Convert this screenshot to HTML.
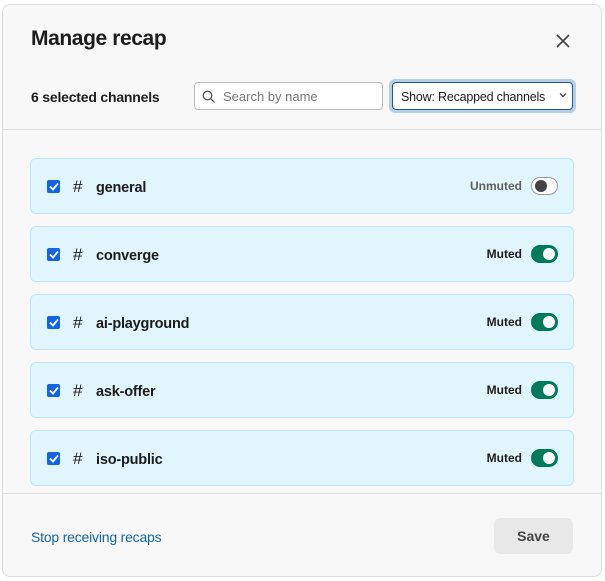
<!DOCTYPE html>
<html><head><meta charset="utf-8"><style>
*{box-sizing:border-box;margin:0;padding:0}
body{width:605px;height:581px;background:#fff;font-family:"Liberation Sans",sans-serif;position:relative;overflow:hidden}
.modal{position:absolute;left:2px;top:4px;width:600px;height:573px;background:#f8f8f8;border:1px solid #ddd;border-radius:8px;overflow:hidden}
.abs{position:absolute}
h1{position:absolute;left:28px;top:22px;font-size:21px;font-weight:bold;color:#1d1c1d;letter-spacing:-0.4px}
.close{left:552px;top:28px}
.sel{left:28px;top:84px;font-size:14px;font-weight:bold;color:#1d1c1d;letter-spacing:-0.2px}
.search{left:191px;top:77px;width:189px;height:28px;background:#fff;border:1px solid #bbb;border-radius:4px;font-size:13px;color:#777;padding:6px 0 0 28px}
.show{left:386px;top:74px;width:187px;height:34px;border:3px solid #b6cfe3;border-radius:6px;background:#b6cfe3}
.show div{width:100%;height:100%;background:#fff;border:1px solid #1d5a9b;border-radius:4px;font-size:12.5px;color:#1d1c1d;padding:7px 0 0 8px;letter-spacing:-0.2px}
.hr{left:0;width:600px;height:1px;background:#ddd}
.row{left:27px;width:544px;height:56px;background:#e1f5fd;border:1px solid #bfe6f7;border-radius:6px}
.cb{position:absolute;left:16px;top:21px;width:13px;height:13px;background:#1264e3;border-radius:2px}
.hash{position:absolute;left:42px;top:18px;font-size:17px;color:#1d1c1d}
.name{position:absolute;left:65px;top:21px;font-size:14.5px;font-weight:bold;color:#1d1c1d;letter-spacing:-0.2px}
.st{position:absolute;right:51px;top:20px;font-size:12px;font-weight:bold;color:#1d1c1d}
.st.u{color:#616061}
.tg{position:absolute;right:15px;top:18px;width:27px;height:18px;border-radius:9px;background:#007a5a}
.tg:after{content:"";position:absolute;right:3px;top:3px;width:12px;height:12px;border-radius:50%;background:#fff}
.tg.off{background:#fff;border:1px solid #999}
.tg.off:after{left:3px;top:2px;background:#454245}
.link{left:28px;top:524px;font-size:14px;color:#1264a3;letter-spacing:-0.2px}
.save{left:491px;top:513px;width:79px;height:36px;background:#e8e8e8;border-radius:6px;font-size:14px;font-weight:bold;color:#454245;text-align:center;line-height:36px}
</style></head><body>
<div class="modal">
<h1>Manage recap</h1>
<svg class="abs close" width="16" height="16" viewBox="0 0 16 16"><path d="M2 2L14 14M14 2L2 14" stroke="#444" stroke-width="1.6"/></svg>
<div class="abs sel">6 selected channels</div>
<div class="abs search">Search by name</div>
<svg class="abs" style="left:199px;top:85px" width="14" height="14" viewBox="0 0 14 14"><circle cx="5.5" cy="5.5" r="4.3" fill="none" stroke="#555" stroke-width="1.3"/><path d="M8.6 8.6L12.5 12.5" stroke="#555" stroke-width="1.3"/></svg>
<div class="abs show"><div>Show: Recapped channels</div></div>
<svg class="abs" style="left:556px;top:87px" width="8" height="6" viewBox="0 0 8 6"><path d="M1 1.5L4 4.5L7 1.5" fill="none" stroke="#333" stroke-width="1.2"/></svg>
<div class="abs hr" style="top:124px"></div>

<div class="abs row" style="top:153px"><div class="cb"></div><svg class="abs" style="left:18px;top:23px" width="10" height="9" viewBox="0 0 10 9"><path d="M1 4.5L4 7.5L9 1.5" fill="none" stroke="#fff" stroke-width="1.8"/></svg><div class="hash">#</div><div class="name">general</div><div class="st u">Unmuted</div><div class="tg off"></div></div>
<div class="abs row" style="top:221px"><div class="cb"></div><svg class="abs" style="left:18px;top:23px" width="10" height="9" viewBox="0 0 10 9"><path d="M1 4.5L4 7.5L9 1.5" fill="none" stroke="#fff" stroke-width="1.8"/></svg><div class="hash">#</div><div class="name">converge</div><div class="st">Muted</div><div class="tg"></div></div>
<div class="abs row" style="top:289px"><div class="cb"></div><svg class="abs" style="left:18px;top:23px" width="10" height="9" viewBox="0 0 10 9"><path d="M1 4.5L4 7.5L9 1.5" fill="none" stroke="#fff" stroke-width="1.8"/></svg><div class="hash">#</div><div class="name">ai-playground</div><div class="st">Muted</div><div class="tg"></div></div>
<div class="abs row" style="top:357px"><div class="cb"></div><svg class="abs" style="left:18px;top:23px" width="10" height="9" viewBox="0 0 10 9"><path d="M1 4.5L4 7.5L9 1.5" fill="none" stroke="#fff" stroke-width="1.8"/></svg><div class="hash">#</div><div class="name">ask-offer</div><div class="st">Muted</div><div class="tg"></div></div>
<div class="abs row" style="top:425px"><div class="cb"></div><svg class="abs" style="left:18px;top:23px" width="10" height="9" viewBox="0 0 10 9"><path d="M1 4.5L4 7.5L9 1.5" fill="none" stroke="#fff" stroke-width="1.8"/></svg><div class="hash">#</div><div class="name">iso-public</div><div class="st">Muted</div><div class="tg"></div></div>

<div class="abs hr" style="top:488px"></div>
<div class="abs link">Stop receiving recaps</div>
<div class="abs save">Save</div>
</div>
</body></html>
